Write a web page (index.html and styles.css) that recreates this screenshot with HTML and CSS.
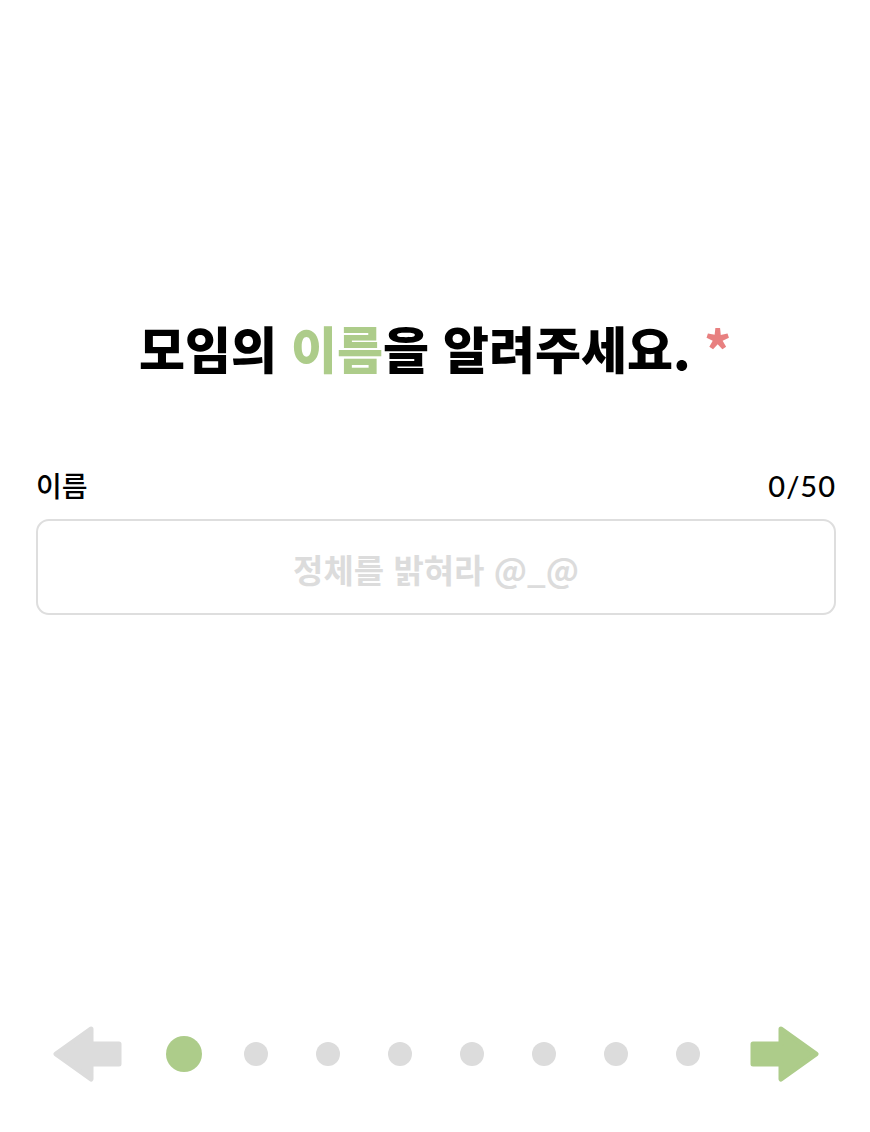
FILE: index.html
```html
<!DOCTYPE html>
<html lang="ko">
<head>
<meta charset="utf-8">
<link rel="stylesheet" href="styles.css">
</head>
<body>
<main class="page">
  <h1 class="title">모임의 <span class="accent">이름</span>을 알려주세요. <span class="req">*</span></h1>
  <section class="field">
    <div class="field-head">
      <span class="label">이름</span>
      <span class="count">0/50</span>
    </div>
    <div class="input">정체를 밝혀라 @_@</div>
  </section>
  <nav class="pager">
    <svg class="arrow" width="69" height="56" viewBox="0 0 69 56">
      <path d="M66 18 H38 V3 L3 28 L38 53 V38 H66 Z" fill="#dcdcdc" stroke="#dcdcdc" stroke-width="5" stroke-linejoin="round"/>
    </svg>
    <div class="dots">
      <span class="cell"><span class="dot big"></span></span>
      <span class="cell"><span class="dot"></span></span>
      <span class="cell"><span class="dot"></span></span>
      <span class="cell"><span class="dot"></span></span>
      <span class="cell"><span class="dot"></span></span>
      <span class="cell"><span class="dot"></span></span>
      <span class="cell"><span class="dot"></span></span>
      <span class="cell"><span class="dot"></span></span>
    </div>
    <svg class="arrow" width="69" height="56" viewBox="0 0 69 56">
      <path d="M3 18 H31 V3 L66 28 L31 53 V38 H3 Z" fill="#adcc8a" stroke="#adcc8a" stroke-width="5" stroke-linejoin="round"/>
    </svg>
  </nav>
</main>
</body>
</html>
```
FILE: styles.css
```css
* { box-sizing: border-box; }
html, body { margin: 0; padding: 0; background: #fff; }
body { font-family: "Noto Sans CJK KR", "Noto Sans", sans-serif; color: #000; }
.page {
  height: 1132px;
  display: flex;
  flex-direction: column;
}
.title {
  margin: 314px 0 0;
  text-align: center;
  font-size: 50px;
  line-height: 66px;
  font-weight: 900;
  letter-spacing: 0;
}
.accent { color: #adcc8a; }
.req { color: #e88080; }
.field {
  margin: 88px 34px 0 36px;
}
.field-head {
  display: flex;
  justify-content: space-between;
  align-items: center;
  height: 34px;
  font-size: 28px;
  font-weight: 500;
}
.count { font-family: "Lato", "Noto Sans", sans-serif; font-weight: 500; font-size: 29px; letter-spacing: 1px; }
.input {
  margin-top: 17px;
  height: 96px;
  border: 2px solid #dedede;
  border-radius: 13px;
  display: flex;
  align-items: center;
  justify-content: center;
  font-size: 33px;
  font-weight: 700;
  color: #dcdcdc;
  padding-top: 4px;
}
.pager {
  margin-top: auto;
  margin-bottom: 50px;
  padding-left: 53px;
  display: flex;
  align-items: center;
}
.arrow { display: block; }
.dots {
  display: flex;
  margin: 0 26px;
}
.cell {
  width: 72px;
  display: flex;
  justify-content: center;
  align-items: center;
}
.dot {
  width: 24px;
  height: 24px;
  border-radius: 50%;
  background: #dcdcdc;
}
.dot.big {
  width: 36px;
  height: 36px;
  background: #adcc8a;
}
```
